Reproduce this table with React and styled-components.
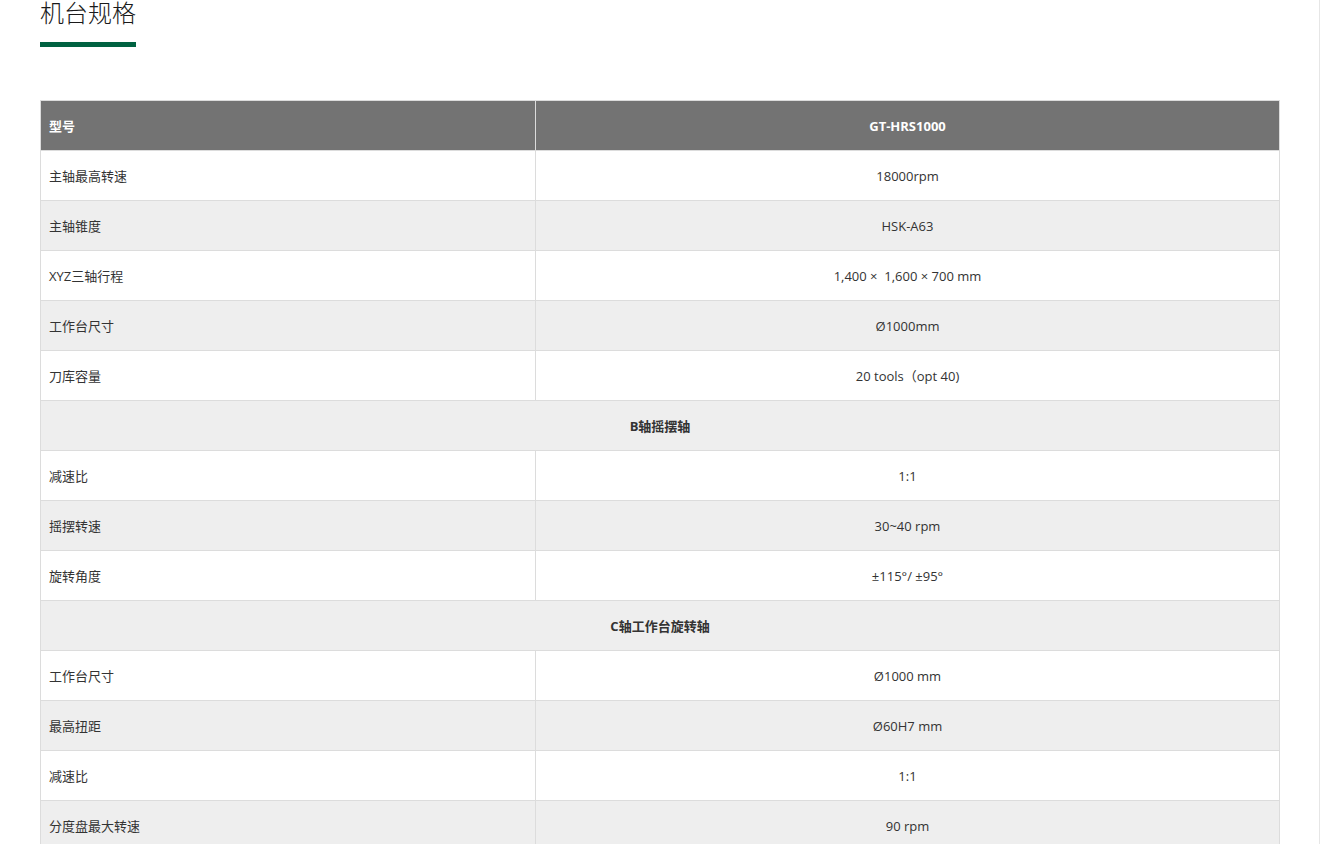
import React from "react";
import styled, { createGlobalStyle } from "styled-components";

const GlobalStyle = createGlobalStyle`
  html, body {
    margin: 0;
    padding: 0;
    background: #fff;
  }
  body {
    font-family: "Open Sans", "Noto Sans CJK SC", sans-serif;
    color: #333;
    overflow: hidden;
  }
`;

const Page = styled.div`
  width: 1320px;
  min-height: 844px;
  box-sizing: border-box;
  padding: 0 41px 0 40px;
  border-right: 1px solid #e6e6e6;
`;

const Heading = styled.div`
  margin-top: -5px;
`;

const Title = styled.h2`
  margin: 0;
  font-family: "Noto Sans CJK SC", sans-serif;
  font-weight: 300;
  font-size: 24px;
  line-height: 34px;
  color: #1a1a1a;
`;

const Bar = styled.div`
  width: 96px;
  height: 5px;
  margin-top: 13px;
  background: #006241;
`;

const Table = styled.table`
  margin-top: 53px;
  width: 1240px;
  border-collapse: collapse;
  table-layout: fixed;
  font-size: 13px;

  td, th {
    height: 49px;
    padding: 0 8px;
    border: 1px solid #dcdcdc;
    font-family: "Open Sans", "Noto Sans CJK SC", sans-serif;
  }

  tbody tr:nth-child(even) td {
    background: #eeeeee;
  }
`;

const HeadCell = styled.th`
  background: #737373;
  color: #fff;
  font-weight: 700;
  text-align: ${(p) => (p.$center ? "center" : "left")};
`;

const Cell = styled.td`
  text-align: ${(p) => (p.$center ? "center" : "left")};
  font-weight: ${(p) => (p.$bold ? 700 : 400)};
  color: #333;
`;

const rows = [
  ["主轴最高转速", "18000rpm"],
  ["主轴锥度", "HSK-A63"],
  ["XYZ三轴行程", "1,400 ×\u00a0 1,600 × 700 mm"],
  ["工作台尺寸", "Ø1000mm"],
  ["刀库容量", "20 tools（opt 40)"],
  ["B轴摇摆轴"],
  ["减速比", "1:1"],
  ["摇摆转速", "30~40 rpm"],
  ["旋转角度", "±115°/ ±95°"],
  ["C轴工作台旋转轴"],
  ["工作台尺寸", "Ø1000 mm"],
  ["最高扭距", "Ø60H7 mm"],
  ["减速比", "1:1"],
  ["分度盘最大转速", "90 rpm"],
];

const App = () => {
  return (
    <>
      <GlobalStyle />
      <Page>
        <Heading>
          <Title>机台规格</Title>
          <Bar />
        </Heading>
        <Table>
          <colgroup>
            <col style={{ width: "495px" }} />
            <col />
          </colgroup>
          <thead>
            <tr>
              <HeadCell>型号</HeadCell>
              <HeadCell $center>GT-HRS1000</HeadCell>
            </tr>
          </thead>
          <tbody>
            {rows.map((r, i) =>
              r.length === 1 ? (
                <tr key={i}>
                  <Cell colSpan={2} $center $bold>
                    {r[0]}
                  </Cell>
                </tr>
              ) : (
                <tr key={i}>
                  <Cell>{r[0]}</Cell>
                  <Cell $center>{r[1]}</Cell>
                </tr>
              )
            )}
          </tbody>
        </Table>
      </Page>
    </>
  );
};

export default App;
